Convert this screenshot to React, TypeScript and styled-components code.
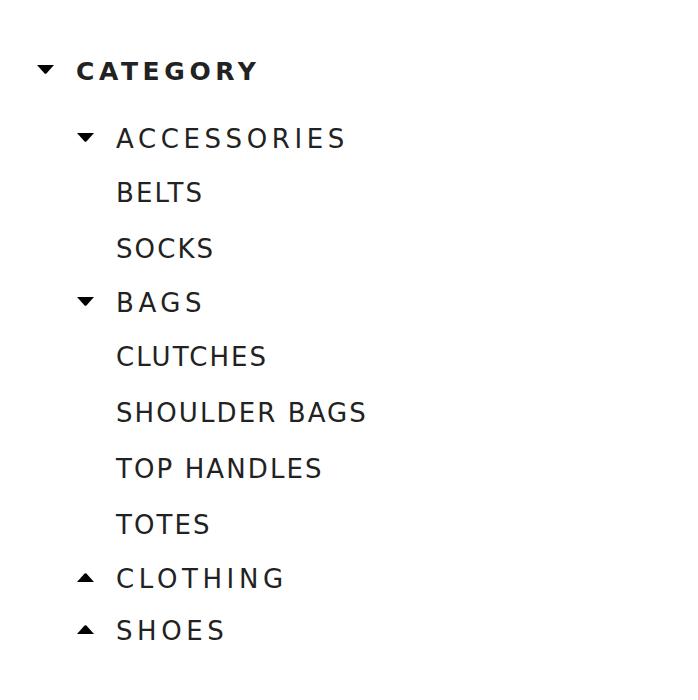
import React from "react";
import styled, { createGlobalStyle } from "styled-components";

type Node = {
  label: string;
  open?: boolean;
  children?: Node[];
};

const tree: Node[] = [
  {
    label: "Accessories",
    open: true,
    children: [{ label: "Belts" }, { label: "Socks" }],
  },
  {
    label: "Bags",
    open: true,
    children: [
      { label: "Clutches" },
      { label: "Shoulder Bags" },
      { label: "Top Handles" },
      { label: "Totes" },
    ],
  },
  { label: "Clothing", open: false, children: [] },
  { label: "Shoes", open: false, children: [] },
];

const GlobalStyle = createGlobalStyle`
  body {
    margin: 0;
    background: #ffffff;
    font-family: "DejaVu Sans", "Liberation Sans", sans-serif;
    color: #222222;
  }
`;

const Caret = ({ up }: { up?: boolean }) => (
  <CaretSvg viewBox="0 0 17 9" width="17" height="9">
    {up ? (
      <path d="M0 9 L7.6 0.6 Q8.5 -0.2 9.4 0.6 L17 9 Z" fill="#000" />
    ) : (
      <path d="M0 0 L17 0 L9.4 8.4 Q8.5 9.2 7.6 8.4 Z" fill="#000" />
    )}
  </CaretSvg>
);

export default function App() {
  return (
    <>
      <GlobalStyle />
      <Sidebar>
        <Heading>
          <Caret />
          <HeadingLabel>Category</HeadingLabel>
        </Heading>
        <Groups>
          {tree.map((group) => (
            <li key={group.label}>
              <GroupHeader>
                <Caret up={!group.open} />
                <GroupLabel>{group.label}</GroupLabel>
              </GroupHeader>
              {group.open && (
                <Leaves>
                  {group.children?.map((leaf) => (
                    <Leaf key={leaf.label}>{leaf.label}</Leaf>
                  ))}
                </Leaves>
              )}
            </li>
          ))}
        </Groups>
      </Sidebar>
    </>
  );
}

const Sidebar = styled.nav`
  padding: 45px 0 0 37px;
`;

const Heading = styled.div`
  display: flex;
  align-items: center;
  gap: 22px;
  height: 52px;
  margin-bottom: 16px;
`;

const CaretSvg = styled.svg`
  flex: none;
  display: block;
  margin-bottom: 3px;
`;

const HeadingLabel = styled.h2`
  margin: 0;
  font-size: 25px;
  font-weight: 700;
  letter-spacing: 4.6px;
  text-transform: uppercase;
  color: #222222;
`;

const Groups = styled.ul`
  list-style: none;
  margin: 0;
  padding: 0 0 0 40px;
`;

const GroupHeader = styled.div`
  display: flex;
  align-items: center;
  gap: 22px;
  height: 52px;
`;

const GroupLabel = styled.span`
  font-size: 26px;
  font-weight: 400;
  letter-spacing: 4.6px;
  text-transform: uppercase;
`;

const Leaves = styled.ul`
  list-style: none;
  margin: 0;
  padding: 0 0 0 39px;
`;

const Leaf = styled.li`
  display: flex;
  align-items: center;
  height: 56px;
  font-size: 26px;
  letter-spacing: 2.1px;
  text-transform: uppercase;
`;
